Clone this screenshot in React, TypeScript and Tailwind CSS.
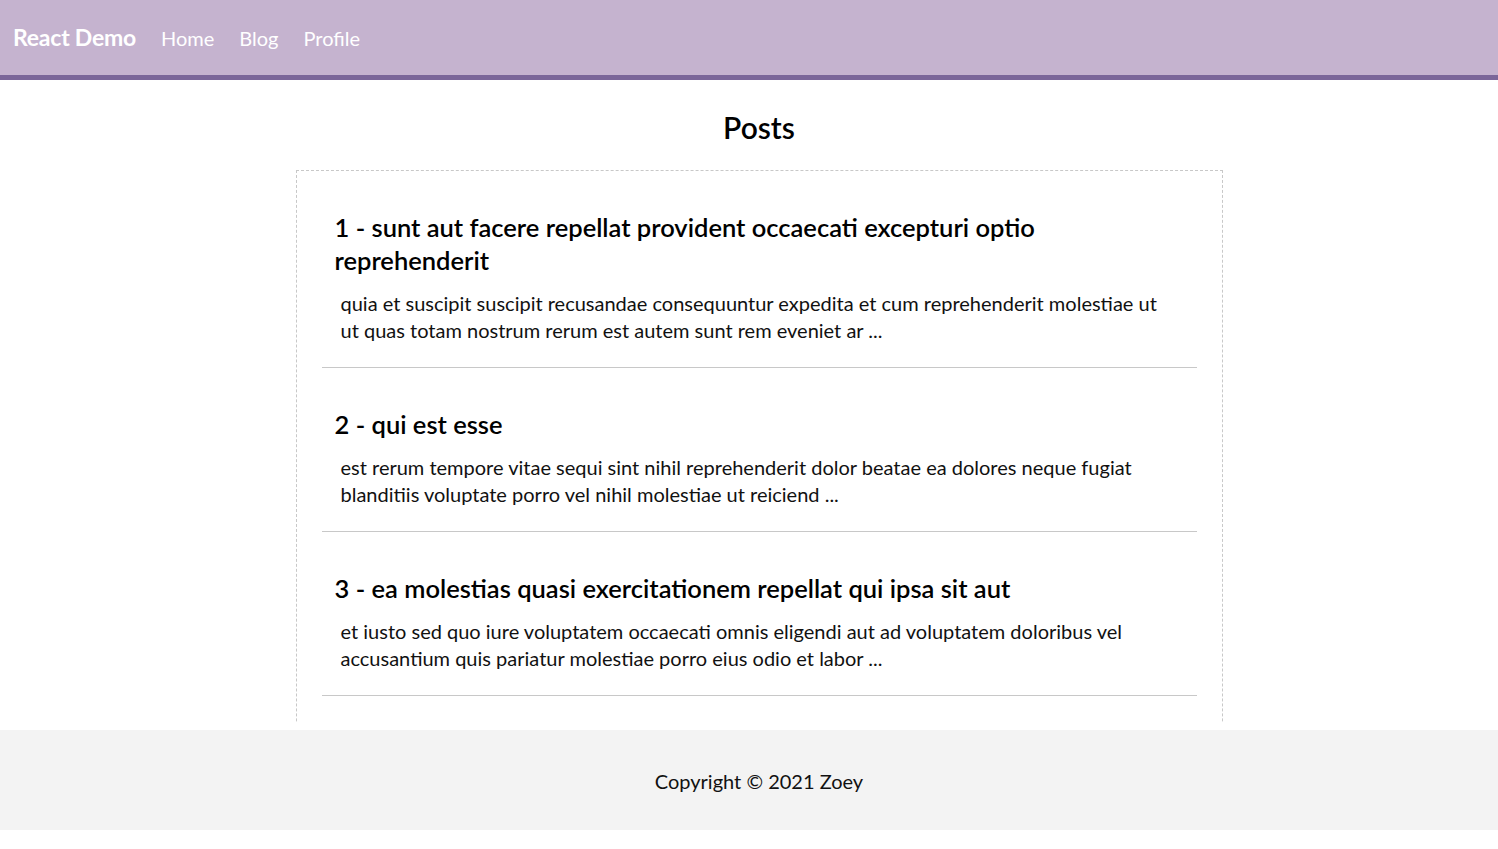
import React from "react";

const posts = [
  {
    id: 1,
    title: "sunt aut facere repellat provident occaecati excepturi optio reprehenderit",
    body: "quia et suscipit suscipit recusandae consequuntur expedita et cum reprehenderit molestiae ut ut quas totam nostrum rerum est autem sunt rem eveniet ar ...",
  },
  {
    id: 2,
    title: "qui est esse",
    body: "est rerum tempore vitae sequi sint nihil reprehenderit dolor beatae ea dolores neque fugiat blanditiis voluptate porro vel nihil molestiae ut reiciend ...",
  },
  {
    id: 3,
    title: "ea molestias quasi exercitationem repellat qui ipsa sit aut",
    body: "et iusto sed quo iure voluptatem occaecati omnis eligendi aut ad voluptatem doloribus vel accusantium quis pariatur molestiae porro eius odio et labor ...",
  },
  {
    id: 4,
    title: "eum et est occaecati",
    body: "ullam et saepe reiciendis voluptatem adipisci sit amet autem assumenda provident rerum culpa quis hic commodi nesciunt rem tenetur doloremque ipsam iure ...",
  },
];

function Header() {
  return (
    <header className="h-[80px] bg-[#c5b3cf] border-b-[5px] border-[#7b6699] flex items-center px-[13px] text-white">
      <a className="text-[23px] font-bold tracking-[-0.01em]">React Demo</a>
      <nav className="flex gap-[25px] ml-[25px] text-[20px]">
        <a>Home</a>
        <a>Blog</a>
        <a>Profile</a>
      </nav>
    </header>
  );
}

function PostItem({ post }: { post: (typeof posts)[number] }) {
  return (
    <li className="pt-[40px] pb-[23px] px-[13px] border-b border-[#c8c8c8]">
      <h3 className="text-[25.5px] leading-[33px] font-semibold text-black">
        {post.id} - {post.title}
      </h3>
      <p className="mt-[13px] pl-[6px] pr-[10px] text-[20px] leading-[27px] text-[#111]">{post.body}</p>
    </li>
  );
}

export default function App() {
  return (
    <div className="font-['Lato','Liberation_Sans',sans-serif] bg-white">
      <Header />
      <main className="h-[650px] flex flex-col pb-[7px] pl-[20px]">
        <div className="flex-1 overflow-hidden">
          <h2 className="text-center text-[30px] leading-[40px] font-semibold text-black mt-[27px] mb-[23px]">Posts</h2>
          <div className="w-[927px] mx-auto border border-dashed border-[#c8c8c8] px-[25px]">
            <ul>
              {posts.map((post) => (
                <PostItem key={post.id} post={post} />
              ))}
            </ul>
          </div>
        </div>
      </main>
      <footer className="h-[100px] bg-[#f3f3f3] flex items-center justify-center pl-[20px] pt-[2px] text-[20px] text-[#111]">
        Copyright © 2021 Zoey
      </footer>
    </div>
  );
}
